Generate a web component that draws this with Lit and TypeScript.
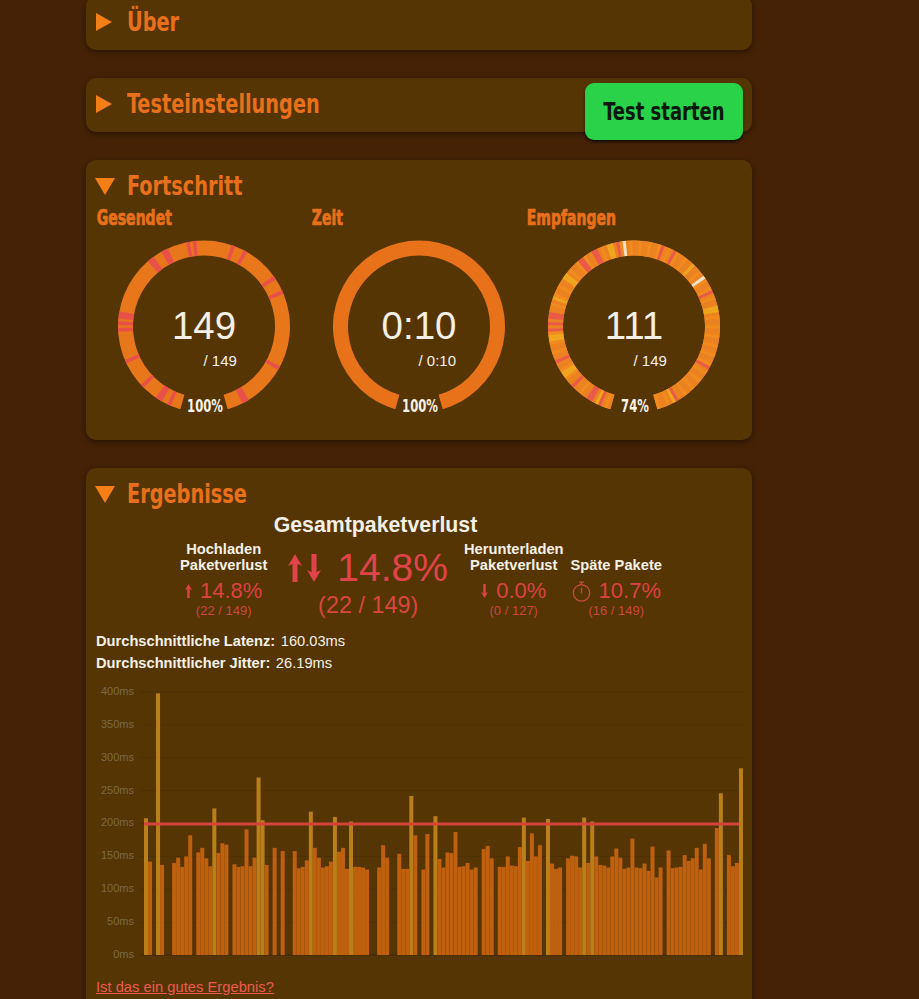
import { LitElement, html, css, svg } from "lit";
import { customElement } from "lit/decorators.js";

const CX = 92;
const CY = 92.5;
const RO = 86;
const RI = 71;
const A0 = -164;
const A1 = 164;
const N = 149;
const STEP = (A1 - A0) / N;

function seg(a: number, b: number): string {
  const p = (r: number, d: number) => {
    const t = (d * Math.PI) / 180;
    return `${(CX + r * Math.sin(t)).toFixed(2)} ${(CY - r * Math.cos(t)).toFixed(2)}`;
  };
  return `M${p(RO, a)}A${RO} ${RO} 0 ${b - a > 180 ? 1 : 0} 1 ${p(RO, b)}L${p(RI, b)}A${RI} ${RI} 0 ${b - a > 180 ? 1 : 0} 0 ${p(RI, a)}Z`;
}

const REDS = [-11.5, -7, -27, -29, -38, -40, 19.7, 28, 54, 65, 119.5, 148.7, 152.4, -156, -149.5, -147.5, -135, -115, -93, -89, -84, -82];
const YELLOWS = [-18, -16, -55, -53, -70, -100, -98, -96, -125, -123, -155, 152, 45, 43, 77, 80];
const WHITES = [-7, 54];

function ringIndex(angle: number): number {
  return Math.floor((angle - A0) / STEP);
}
const redSet = new Set(REDS.map(ringIndex));
const yellowSet = new Set(YELLOWS.map(ringIndex));
const whiteSet = new Set(WHITES.map(ringIndex));

function ringSent() {
  return svg`<path d=${seg(A0, A1)} fill="#e8761a"></path>
    ${[...redSet].map((i) => svg`<path d=${seg(A0 + i * STEP, A0 + (i + 1.2) * STEP)} fill="#e8504a"></path>`)}`;
}
function ringTime() {
  return svg`<path d=${seg(A0, A1)} fill="#e8721a"></path>`;
}
function ringReceived() {
  const out = [svg`<path d=${seg(A0, A1)} fill="#ee861f"></path>`];
  for (let i = 0; i < N; i++) {
    let c = i % 3 === 0 ? "#ec831f" : i % 3 === 1 ? "#f18b1e" : "#ea8122";
    if (redSet.has(i)) c = "#e95a48";
    if (yellowSet.has(i)) c = "#efa51e";
    if (whiteSet.has(i)) c = "#eee3c8";
    out.push(svg`<path d=${seg(A0 + i * STEP, A0 + (i + 1.15) * STEP)} fill=${c}></path>`);
  }
  return out;
}

// value in ms; 0 = lost packet; late packets (over the line) get the lighter colour
const BARS = [
  208, 142, 0, 398, 137, 0, 0, 140, 148, 134, 150, 182, 0, 156, 163, 147, 135, 223, 155, 170, 168, 0, 138, 134, 135, 191, 135, 148, 270, 205,
  137, 0, 163, 0, 158, 0, 0, 158, 132, 134, 144, 218, 163, 148, 133, 135, 142, 210, 157, 163, 131, 203, 134, 134, 133, 130, 0, 0, 133, 167,
  148, 0, 0, 154, 131, 131, 242, 182, 0, 130, 184, 0, 211, 146, 133, 156, 155, 187, 134, 135, 140, 130, 133, 0, 161, 166, 147, 0, 134, 134,
  150, 136, 135, 164, 209, 143, 185, 150, 167, 0, 207, 139, 131, 133, 0, 147, 151, 150, 133, 209, 140, 203, 150, 137, 136, 133, 150, 162, 148,
  131, 133, 177, 133, 132, 139, 128, 165, 118, 133, 0, 159, 132, 133, 134, 152, 143, 147, 163, 130, 169, 147, 0, 193, 246, 0, 152, 135, 140, 284,
];

const BASE = 275;
const SCALE = 0.6575;
const X0 = 48;
const BSTEP = 4.02;

function chart() {
  const ticks = [400, 350, 300, 250, 200, 150, 100, 50, 0];
  return html`<svg class="chart" viewBox="0 0 646 285" width="646" height="285">
    ${ticks.map((t) => {
      const y = BASE - t * SCALE;
      return svg`<line x1=${X0 - 4} x2="646" y1=${y} y2=${y} stroke=${t === 0 ? "#43280a" : "#4e3004"} stroke-width="1"></line>
      <text x="38" y=${y} class="tick">${t}ms</text>`;
    })}
    ${BARS.map((v, i) =>
      v === 0
        ? null
        : svg`<rect x=${X0 + i * BSTEP} y=${BASE - v * SCALE} width=${BSTEP - 0.03} height=${v * SCALE} fill=${v > 200 ? "#ba7f19" : "#bf600f"}></rect>`
    )}
    <rect x=${X0} y=${BASE - 200 * SCALE - 1} width="595" height="3" fill="#d4423c"></rect>
  </svg>`;
}

const right = html`<svg class="tri" viewBox="0 0 20 20" width="20" height="20"><polygon points="1,1 17,10 1,19"></polygon></svg>`;
const down = html`<svg class="tri" viewBox="0 0 20 20" width="20" height="20"><polygon points="0,2 20,2 10,19"></polygon></svg>`;

const upPts = "7,0 14,12 9.5,10 9.5,28 4.5,28 4.5,10 0,12";
const downPts = "7,28 14,16 9.5,18 9.5,0 4.5,0 4.5,18 0,16";
const arrowUp = html`<svg class="arrow" viewBox="0 0 14 28"><polygon points=${upPts}></polygon></svg>`;
const arrowDown = html`<svg class="arrow" viewBox="0 0 14 28"><polygon points=${downPts}></polygon></svg>`;
const watch = html`<svg class="watch" viewBox="0 0 20 22" fill="none" stroke="currentColor" stroke-width="1.4">
  <circle cx="10" cy="12.5" r="8.6"></circle>
  <path d="M7.5 1.2h5M10 1.2v3M10 7v6"></path>
</svg>`;

@customElement("app-root")
export class AppRoot extends LitElement {
  static styles = css`
    :host {
      display: block;
      height: 999px;
      overflow: hidden;
      background: #452205;
      font-family: "Liberation Sans", Arial, sans-serif;
      color: #f4f0e6;
    }
    .stack {
      width: 666px;
      margin: -4px 0 0 86px;
      display: flex;
      flex-direction: column;
      gap: 28px;
    }
    .card {
      position: relative;
      background: #553504;
      border-radius: 10px;
      box-shadow: 0 2px 6px rgba(0, 0, 0, 0.45);
      padding: 0 10px 8px;
    }
    .card.open {
      padding-bottom: 22px;
    }
    .head {
      display: flex;
      align-items: center;
      gap: 12px;
      padding-top: 6px;
      height: 40px;
      font-family: "DejaVu Sans Condensed", "DejaVu Sans", sans-serif;
      font-stretch: condensed;
      font-weight: 700;
      font-size: 26px;
      color: #e8701a;
    }
    .head span {
      display: inline-block;
      transform: scaleX(0.825);
      transform-origin: left center;
      white-space: nowrap;
    }
    .tri {
      flex: none;
      width: 20px;
      height: 20px;
      margin-left: -1px;
      fill: #f57f17;
    }
    .start {
      position: absolute;
      top: 5px;
      right: 9px;
      width: 158px;
      height: 57px;
      border: none;
      border-radius: 9px;
      background: #2ad24a;
      box-shadow: 0 2px 3px rgba(0, 0, 0, 0.7);
      color: #06180a;
      font-family: "DejaVu Sans Condensed", "DejaVu Sans", sans-serif;
      font-stretch: condensed;
      font-weight: 700;
      font-size: 25px;
      padding: 0;
      white-space: nowrap;
    }
    .start span {
      display: inline-block;
      transform: scaleX(0.8);
    }
    .rings {
      display: grid;
      grid-template-columns: repeat(3, 215px);
    }
    .label {
      font-family: "DejaVu Sans Condensed", "DejaVu Sans", sans-serif;
      font-stretch: condensed;
      font-weight: 700;
      font-size: 20.5px;
      line-height: 24px;
      color: #e8701a;
      -webkit-text-stroke: 0.7px #e8701a;
      padding-left: 1px;
      transform: scaleX(0.76);
      transform-origin: left center;
      white-space: nowrap;
    }
    .gauge {
      position: relative;
      width: 184px;
      height: 184px;
      margin: 4px auto 0;
    }
    .gauge svg {
      display: block;
    }
    .num {
      position: absolute;
      left: 1px;
      right: 0;
      top: 70px;
      text-align: center;
      font-size: 38.5px;
      line-height: 44px;
    }
    .of {
      position: absolute;
      left: 92px;
      top: 117px;
      font-size: 15px;
      line-height: 20px;
      white-space: nowrap;
    }
    .pct {
      position: absolute;
      left: 2px;
      right: 0;
      top: 161px;
      text-align: center;
      font-family: "DejaVu Sans Condensed", "DejaVu Sans", sans-serif;
      font-stretch: condensed;
      font-weight: 700;
      font-size: 17px;
      line-height: 22px;
      color: #f7f3e8;
      transform: scaleX(0.76);
    }
    .total {
      margin: -1px 0 0;
      padding-right: 87px;
      text-align: center;
      font-size: 21.3px;
      line-height: 24px;
      font-weight: 700;
    }
    .stats {
      display: flex;
      justify-content: center;
      align-items: flex-end;
      gap: 7px;
      height: 82px;
      padding-left: 4px;
    }
    .stat {
      text-align: center;
      white-space: nowrap;
    }
    .stat.big {
      margin: 0 9px 0 14px;
    }
    .stat b {
      display: block;
      font-size: 14.7px;
      line-height: 16px;
    }
    .val {
      display: flex;
      justify-content: center;
      align-items: center;
      gap: 8px;
      color: #dc4244;
      font-size: 22px;
      line-height: 26px;
      margin-top: 5px;
    }
    .sub {
      color: #c9483f;
      font-size: 13px;
      line-height: 16px;
      margin-top: -1px;
    }
    .arrow {
      width: 7px;
      height: 16px;
      fill: currentColor;
    }
    .watch {
      width: 19px;
      height: 21px;
      color: #c44a3c;
    }
    .big .val {
      color: #e0444a;
      font-size: 39px;
      line-height: 46px;
      margin: 0;
      gap: 5px;
    }
    .big .arrow {
      width: 14px;
      height: 28px;
    }
    .big .num-text {
      margin-left: 11px;
    }
    .big .sub {
      color: #d9453f;
      font-size: 23.4px;
      line-height: 26px;
      margin: 1px 0 1px;
    }
    .lat {
      margin-top: 11px;
      font-size: 14.67px;
      line-height: 22px;
    }
    .lat b {
      margin-right: 1.5px;
    }
    .chart {
      display: block;
      margin-top: 6px;
      overflow: visible;
    }
    .tick {
      font-size: 11px;
      fill: #7b6a47;
      text-anchor: end;
      dominant-baseline: middle;
    }
    .link {
      display: block;
      margin-top: 12px;
      font-size: 14.75px;
      line-height: 20px;
      color: #ec5c50;
    }
  `;

  private gauge(label: string, ring: unknown, num: string, of: string, pct: string) {
    return html`<div>
      <div class="label">${label}</div>
      <div class="gauge">
        <svg viewBox="0 0 184 184" width="184" height="184">${ring}</svg>
        <div class="num">${num}</div>
        <div class="of">/ ${of}</div>
        <div class="pct">${pct}</div>
      </div>
    </div>`;
  }

  render() {
    return html`<div class="stack">
      <section class="card">
        <div class="head">${right}<span>Über</span></div>
      </section>
      <section class="card">
        <div class="head">${right}<span>Testeinstellungen</span></div>
        <button class="start"><span>Test starten</span></button>
      </section>
      <section class="card open">
        <div class="head">${down}<span>Fortschritt</span></div>
        <div class="rings">
          ${this.gauge("Gesendet", ringSent(), "149", "149", "100%")}
          ${this.gauge("Zeit", ringTime(), "0:10", "0:10", "100%")}
          ${this.gauge("Empfangen", ringReceived(), "111", "149", "74%")}
        </div>
      </section>
      <section class="card open">
        <div class="head">${down}<span>Ergebnisse</span></div>
        <h2 class="total">Gesamtpaketverlust</h2>
        <div class="stats">
          <div class="stat">
            <b>Hochladen<br />Paketverlust</b>
            <div class="val">${arrowUp}<span>14.8%</span></div>
            <div class="sub">(22 / 149)</div>
          </div>
          <div class="stat big">
            <div class="val">${arrowUp}${arrowDown}<span class="num-text">14.8%</span></div>
            <div class="sub">(22 / 149)</div>
          </div>
          <div class="stat">
            <b>Herunterladen<br />Paketverlust</b>
            <div class="val">${arrowDown}<span>0.0%</span></div>
            <div class="sub">(0 / 127)</div>
          </div>
          <div class="stat">
            <b>Späte Pakete</b>
            <div class="val">${watch}<span>10.7%</span></div>
            <div class="sub">(16 / 149)</div>
          </div>
        </div>
        <div class="lat">
          <div><b>Durchschnittliche Latenz:</b> 160.03ms</div>
          <div><b>Durchschnittlicher Jitter:</b> 26.19ms</div>
        </div>
        ${chart()}
        <a class="link" href="#">Ist das ein gutes Ergebnis?</a>
      </section>
    </div>`;
  }
}
